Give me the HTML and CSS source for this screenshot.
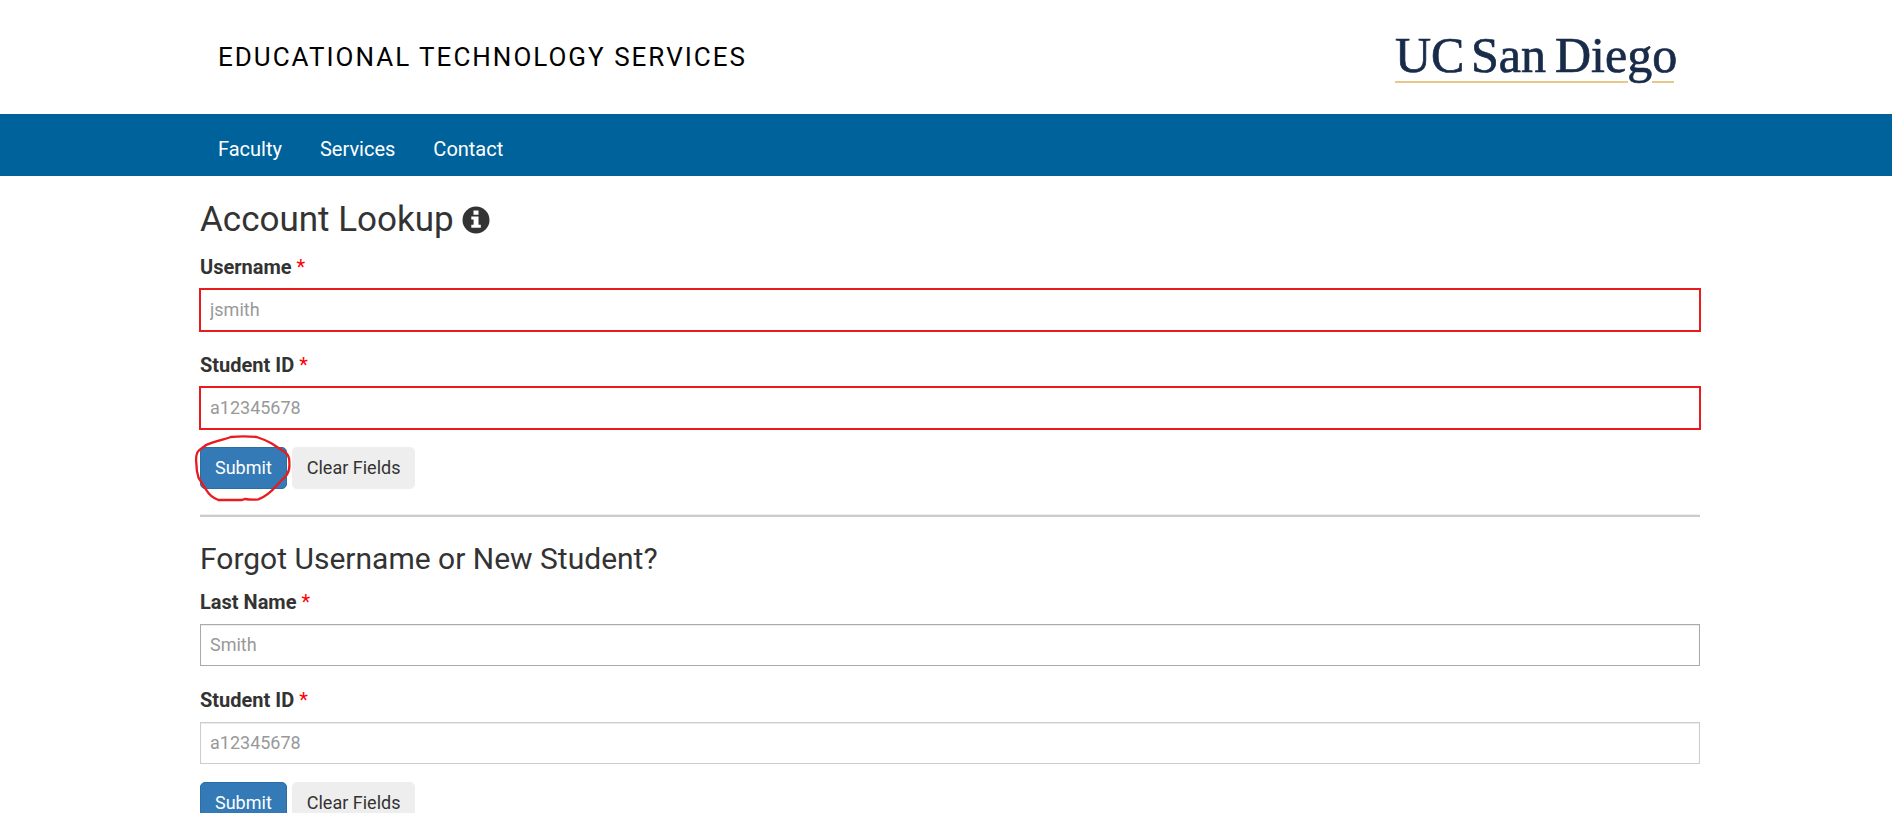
FILE: index.html
```html
<!DOCTYPE html>
<html lang="en">
<head>
<meta charset="utf-8">
<title>Account Lookup</title>
<link rel="stylesheet" href="styles.css">
</head>
<body>
<header class="header">
  <div class="container header-inner">
    <a class="site-title" href="#">Educational Technology Services</a>
    <a class="logo" href="#" aria-label="UC San Diego">
      <svg width="284" height="64" viewBox="0 0 284 64">
        <g class="logo-text">
          <text x="0" y="47">UC</text>
          <text x="76" y="47">San</text>
          <text x="160" y="47">Diego</text>
        </g>
        <path class="logo-rule" d="M0 57H233M257 57H279"/>
      </svg>
    </a>
  </div>
</header>
<nav class="nav">
  <div class="container nav-inner">
    <a href="#">Faculty</a>
    <a href="#">Services</a>
    <a href="#">Contact</a>
  </div>
</nav>
<main class="container main">
  <h1>Account Lookup
    <svg class="info" width="28" height="28" viewBox="0 0 28 28" role="img" aria-label="Information">
      <circle cx="14" cy="14" r="13.5" fill="#333"/>
      <path fill="#fff" d="M11.5 4.5h5v4.2h-5zM9.3 10.6h7.2v8.2h2.3v3H9.3v-3h2.3v-5.2H9.3z"/>
    </svg>
  </h1>
  <form>
    <div class="field">
      <label for="username">Username <span class="required">*</span></label>
      <input class="marked" id="username" type="text" placeholder="jsmith">
    </div>
    <div class="field">
      <label for="sid">Student ID <span class="required">*</span></label>
      <input class="marked" id="sid" type="text" placeholder="a12345678">
    </div>
    <div class="actions">
      <button class="btn btn-primary" type="submit">Submit</button>
      <button class="btn btn-default" type="reset">Clear Fields</button>
      <svg class="circle-mark" width="98" height="70" viewBox="12 279 294 210" aria-hidden="true">
        <path d="M44 317C62 307 98 300 122 291Q160 287 200 291Q225 299 244 310L284 336Q299 345 298 368Q300 390 290 405L262 434Q235 466 205 478Q185 480 165 477L155 480H85Q60 470 49 450L26 414Q19 395 19 370Q16 340 27 331Q38 322 50 314"/>
      </svg>
    </div>
  </form>
  <hr>
  <h2>Forgot Username or New Student?</h2>
  <form>
    <div class="field">
      <label for="lastname">Last Name <span class="required">*</span></label>
      <input class="strong" id="lastname" type="text" placeholder="Smith">
    </div>
    <div class="field">
      <label for="sid2">Student ID <span class="required">*</span></label>
      <input id="sid2" type="text" placeholder="a12345678">
    </div>
    <div class="actions">
      <button class="btn btn-primary" type="submit">Submit</button>
      <button class="btn btn-default" type="reset">Clear Fields</button>
    </div>
  </form>
</main>
</body>
</html>
```
FILE: styles.css
```css
* { box-sizing: border-box; }
html { overflow: hidden; }
body {
  margin: 0;
  background: #fff;
  color: #333;
  font: 18px/26px Roboto, "Liberation Sans", sans-serif;
}
a { color: inherit; text-decoration: none; }
.container {
  max-width: 1508px;
  margin: 0 auto;
  padding-left: 8px;
}
.header-inner {
  display: flex;
  align-items: center;
  justify-content: space-between;
  min-height: 114px;
  padding-left: 26px;
  padding-right: 21px;
}
.site-title {
  color: #000;
  font-size: 26px;
  line-height: 34px;
  letter-spacing: 2px;
  text-transform: uppercase;
}
.logo svg { display: block; }
.logo-text {
  fill: #182b49;
  stroke: #182b49;
  stroke-width: 0.7;
  font: 50px "Liberation Serif", serif;
}
.logo-rule { stroke: #e6c88b; stroke-width: 2; }
.nav { background: #00629b; }
.nav-inner {
  display: flex;
  gap: 38px;
  padding: 21px 26px 13px;
  color: #fff;
  font-size: 20px;
  line-height: 28px;
}
.main { padding-top: 24px; }
h1, h2 { margin: 0 0 12px; font-weight: 400; }
h1 {
  display: flex;
  align-items: center;
  gap: 8px;
  margin-bottom: 13px;
  font-size: 35px;
  line-height: 40px;
}
h2 { font-size: 30px; line-height: 34px; }
.field { margin-bottom: 20px; }
.field label {
  display: block;
  margin-bottom: 8px;
  font-size: 20px;
  line-height: 28px;
  font-weight: 700;
}
.required { color: #f00; font-weight: 400; }
.field input {
  display: block;
  width: 100%;
  height: 42px;
  padding: 5px 9px 7px;
  border: 1px solid #ccc;
  border-radius: 0;
  background: #fff;
  box-shadow: inset 0 1px 1px rgba(0, 0, 0, .08);
  color: #555;
  font: inherit;
}
.field input::placeholder { color: #999; opacity: 1; }
.field input.strong { border-color: #aaa; }
.field input.marked {
  border-color: #e81c1e;
  outline: 1px solid #e81c1e;
  box-shadow: none;
}
.actions {
  position: relative;
  display: flex;
  gap: 5px;
  margin-top: -2px;
}
.btn {
  height: 42px;
  padding: 0 14px;
  border: 1px solid #eee;
  border-radius: 5px;
  font: inherit;
}
.btn-primary { border-color: #2e6da4; background: #337ab7; color: #fff; }
.btn-default { background: #eee; color: #333; }
.circle-mark { position: absolute; left: -6px; top: -14px; }
.circle-mark path { fill: none; stroke: #e81c1e; stroke-width: 7; }
hr {
  height: 3px;
  margin: 25px 0;
  border: 0;
  border-top: 1px solid #eee;
  background: #ccc;
}
```
